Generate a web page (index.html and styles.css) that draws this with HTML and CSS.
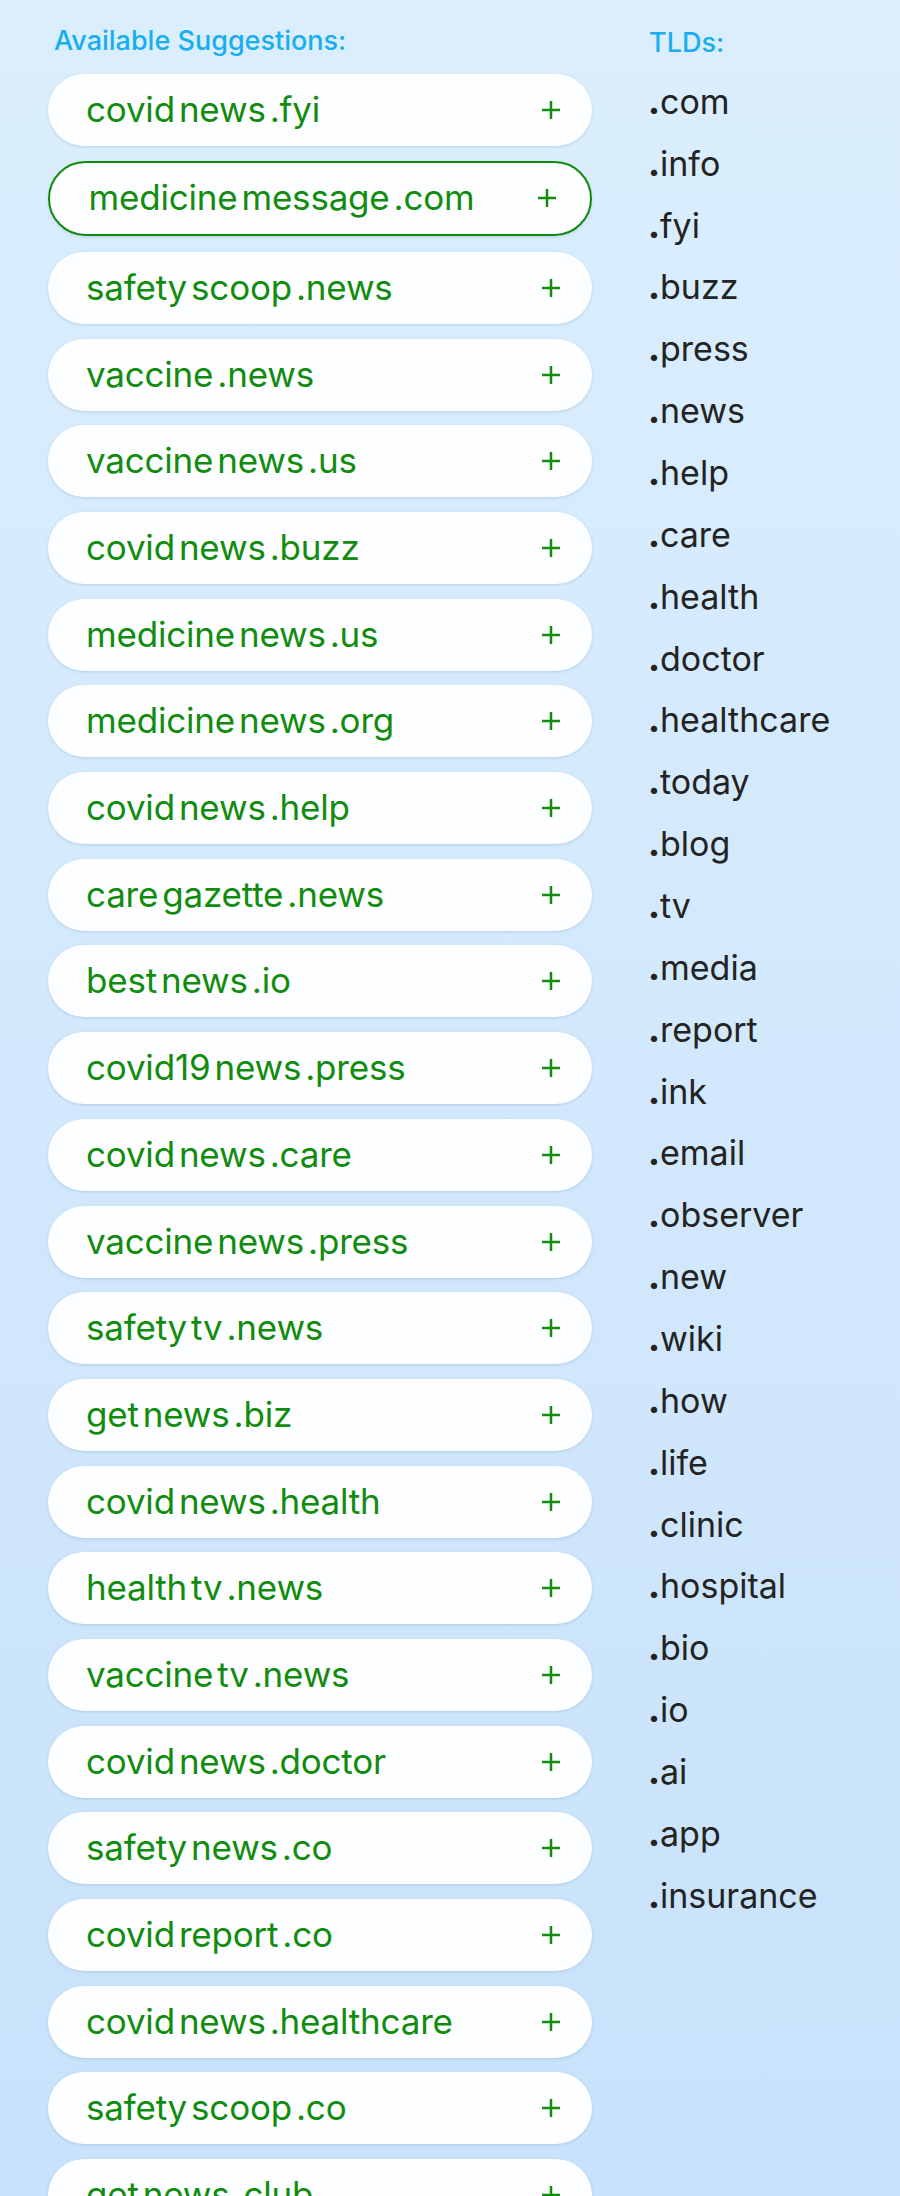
FILE: index.html
```html
<!DOCTYPE html>
<html lang="en">
<head>
<meta charset="utf-8">
<title>Domain Suggestions</title>
<link rel="stylesheet" href="styles.css">
</head>
<body>
<div class="page">
  <section class="suggestions">
    <h2 class="label">Available Suggestions:</h2>
    <ul class="pills">
      <li class="pill"><span class="name"><span>covid</span><span>news</span><span>.fyi</span></span><svg class="plus" viewBox="0 0 18 18"><path d="M9 0V18M0 9H18"/></svg></li>
      <li class="pill selected"><span class="name"><span>medicine</span><span>message</span><span>.com</span></span><svg class="plus" viewBox="0 0 18 18"><path d="M9 0V18M0 9H18"/></svg></li>
      <li class="pill"><span class="name"><span>safety</span><span>scoop</span><span>.news</span></span><svg class="plus" viewBox="0 0 18 18"><path d="M9 0V18M0 9H18"/></svg></li>
      <li class="pill"><span class="name"><span>vaccine</span><span>.news</span></span><svg class="plus" viewBox="0 0 18 18"><path d="M9 0V18M0 9H18"/></svg></li>
      <li class="pill"><span class="name"><span>vaccine</span><span>news</span><span>.us</span></span><svg class="plus" viewBox="0 0 18 18"><path d="M9 0V18M0 9H18"/></svg></li>
      <li class="pill"><span class="name"><span>covid</span><span>news</span><span>.buzz</span></span><svg class="plus" viewBox="0 0 18 18"><path d="M9 0V18M0 9H18"/></svg></li>
      <li class="pill"><span class="name"><span>medicine</span><span>news</span><span>.us</span></span><svg class="plus" viewBox="0 0 18 18"><path d="M9 0V18M0 9H18"/></svg></li>
      <li class="pill"><span class="name"><span>medicine</span><span>news</span><span>.org</span></span><svg class="plus" viewBox="0 0 18 18"><path d="M9 0V18M0 9H18"/></svg></li>
      <li class="pill"><span class="name"><span>covid</span><span>news</span><span>.help</span></span><svg class="plus" viewBox="0 0 18 18"><path d="M9 0V18M0 9H18"/></svg></li>
      <li class="pill"><span class="name"><span>care</span><span>gazette</span><span>.news</span></span><svg class="plus" viewBox="0 0 18 18"><path d="M9 0V18M0 9H18"/></svg></li>
      <li class="pill"><span class="name"><span>best</span><span>news</span><span>.io</span></span><svg class="plus" viewBox="0 0 18 18"><path d="M9 0V18M0 9H18"/></svg></li>
      <li class="pill"><span class="name"><span>covid19</span><span>news</span><span>.press</span></span><svg class="plus" viewBox="0 0 18 18"><path d="M9 0V18M0 9H18"/></svg></li>
      <li class="pill"><span class="name"><span>covid</span><span>news</span><span>.care</span></span><svg class="plus" viewBox="0 0 18 18"><path d="M9 0V18M0 9H18"/></svg></li>
      <li class="pill"><span class="name"><span>vaccine</span><span>news</span><span>.press</span></span><svg class="plus" viewBox="0 0 18 18"><path d="M9 0V18M0 9H18"/></svg></li>
      <li class="pill"><span class="name"><span>safety</span><span>tv</span><span>.news</span></span><svg class="plus" viewBox="0 0 18 18"><path d="M9 0V18M0 9H18"/></svg></li>
      <li class="pill"><span class="name"><span>get</span><span>news</span><span>.biz</span></span><svg class="plus" viewBox="0 0 18 18"><path d="M9 0V18M0 9H18"/></svg></li>
      <li class="pill"><span class="name"><span>covid</span><span>news</span><span>.health</span></span><svg class="plus" viewBox="0 0 18 18"><path d="M9 0V18M0 9H18"/></svg></li>
      <li class="pill"><span class="name"><span>health</span><span>tv</span><span>.news</span></span><svg class="plus" viewBox="0 0 18 18"><path d="M9 0V18M0 9H18"/></svg></li>
      <li class="pill"><span class="name"><span>vaccine</span><span>tv</span><span>.news</span></span><svg class="plus" viewBox="0 0 18 18"><path d="M9 0V18M0 9H18"/></svg></li>
      <li class="pill"><span class="name"><span>covid</span><span>news</span><span>.doctor</span></span><svg class="plus" viewBox="0 0 18 18"><path d="M9 0V18M0 9H18"/></svg></li>
      <li class="pill"><span class="name"><span>safety</span><span>news</span><span>.co</span></span><svg class="plus" viewBox="0 0 18 18"><path d="M9 0V18M0 9H18"/></svg></li>
      <li class="pill"><span class="name"><span>covid</span><span>report</span><span>.co</span></span><svg class="plus" viewBox="0 0 18 18"><path d="M9 0V18M0 9H18"/></svg></li>
      <li class="pill"><span class="name"><span>covid</span><span>news</span><span>.healthcare</span></span><svg class="plus" viewBox="0 0 18 18"><path d="M9 0V18M0 9H18"/></svg></li>
      <li class="pill"><span class="name"><span>safety</span><span>scoop</span><span>.co</span></span><svg class="plus" viewBox="0 0 18 18"><path d="M9 0V18M0 9H18"/></svg></li>
      <li class="pill"><span class="name"><span>get</span><span>news</span><span>.club</span></span><svg class="plus" viewBox="0 0 18 18"><path d="M9 0V18M0 9H18"/></svg></li>
    </ul>
  </section>
  <section class="tlds">
    <h2 class="label label-tld">TLDs:</h2>
    <ul class="tld-list">
      <li><b>.</b>com</li>
      <li><b>.</b>info</li>
      <li><b>.</b>fyi</li>
      <li><b>.</b>buzz</li>
      <li><b>.</b>press</li>
      <li><b>.</b>news</li>
      <li><b>.</b>help</li>
      <li><b>.</b>care</li>
      <li><b>.</b>health</li>
      <li><b>.</b>doctor</li>
      <li><b>.</b>healthcare</li>
      <li><b>.</b>today</li>
      <li><b>.</b>blog</li>
      <li><b>.</b>tv</li>
      <li><b>.</b>media</li>
      <li><b>.</b>report</li>
      <li><b>.</b>ink</li>
      <li><b>.</b>email</li>
      <li><b>.</b>observer</li>
      <li><b>.</b>new</li>
      <li><b>.</b>wiki</li>
      <li><b>.</b>how</li>
      <li><b>.</b>life</li>
      <li><b>.</b>clinic</li>
      <li><b>.</b>hospital</li>
      <li><b>.</b>bio</li>
      <li><b>.</b>io</li>
      <li><b>.</b>ai</li>
      <li><b>.</b>app</li>
      <li><b>.</b>insurance</li>
    </ul>
  </section>
</div>
</body>
</html>
```

FILE: styles.css
```css
html {
  background: linear-gradient(180deg, #daeefd 0%, #d2e8fc 50%, #c8e2fb 100%);
  min-height: 100%;
}
body {
  margin: 0;
  font-family: Inter, "Noto Sans", sans-serif;
  height: 2196px;
  overflow: hidden;
}
.page {
  display: flex;
  align-items: flex-start;
  padding-left: 48px;
  gap: 56px;
}
.suggestions {
  width: 544px;
  flex: none;
}
.label {
  margin: 25px 0 0 6px;
  font-size: 27px;
  line-height: 32px;
  font-weight: 500;
  color: #18aef0;
}
.pills {
  list-style: none;
  margin: 17px 0 0;
  padding: 0;
  display: flex;
  flex-direction: column;
  gap: 14.7px;
}
.pill {
  height: 72px;
  box-sizing: border-box;
  background: #fdfeff;
  border-radius: 36px;
  box-shadow: 0 1px 3px rgba(40, 90, 140, 0.18);
  display: flex;
  align-items: center;
  justify-content: space-between;
  padding: 0 32px 0 38px;
  color: #118c0e;
}
.pill.selected {
  height: 75px;
  border: 2px solid #128a0e;
  padding: 0 34px 0 38.5px;
  margin-bottom: 1.6px;
  border-radius: 38px;
}
.name {
  display: flex;
  font-size: 35px;
  letter-spacing: -0.2px;
  padding-bottom: 2px;
}
.name span {
  margin-right: 4px;
}
.plus {
  width: 18px;
  height: 18px;
  flex: none;
  fill: none;
  stroke: #118c0e;
  stroke-width: 2.5;
}
.tlds {
  flex: none;
}
.label-tld {
  margin: 27px 0 0 1px;
}
.tld-list {
  list-style: none;
  margin: 11.8px 0 0;
  padding: 0;
  font-size: 34px;
  line-height: 61.86px;
  color: #232323;
}
.tld-list b {
  font-weight: 800;
}
```
